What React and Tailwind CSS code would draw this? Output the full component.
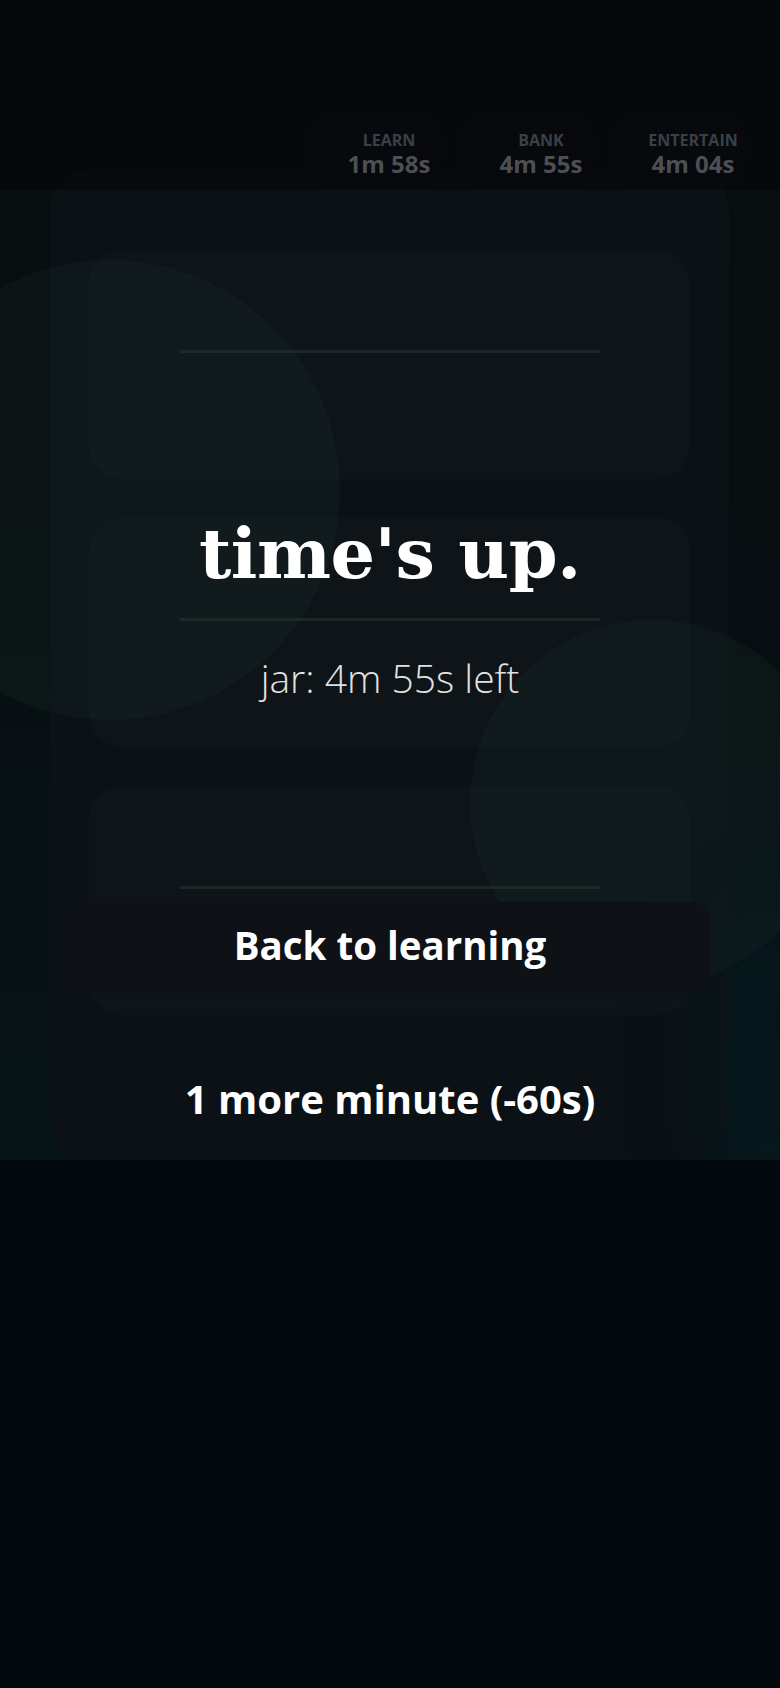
import React from "react";

const sans = { fontFamily: '"Open Sans", "Noto Sans", sans-serif' };
const serif = { fontFamily: '"DejaVu Serif", "Liberation Serif", serif' };

function Stat({ label, value }) {
  return (
    <div className="w-[136px] h-[75px] rounded-[24px] bg-[#07090c] flex flex-col items-center pl-[28px] pt-[18px]">
      <div className="text-[16px] leading-[18px] font-bold uppercase text-[#3b4046]">{label}</div>
      <div className="mt-[3px] text-[24px] leading-[24px] font-bold text-[#4c4f54] whitespace-nowrap">{value}</div>
    </div>
  );
}

function InnerCard() {
  return (
    <div className="h-[229px] rounded-[32px] bg-[#0e1417] flex justify-center pt-[100px]">
      <div className="w-[420px] h-[3px] bg-[#192827]" />
    </div>
  );
}

export default function App() {
  return (
    <div className="relative w-full h-[1688px] bg-[#020a0d] overflow-hidden" style={sans}>
      {/* dimmed page behind */}
      <div className="relative h-[1160px] overflow-hidden bg-gradient-to-b from-[#080d10] via-[#080e11] to-[#061417]">
        <div className="pt-[170px] pl-[50px] pr-[51px]">
          <div className="h-[990px] rounded-[40px] bg-[#0b1114] pt-[80px] px-[39px] flex flex-col gap-[39px]">
            <InnerCard />
            <InnerCard />
            <InnerCard />
          </div>
        </div>

        {/* decorative blobs */}
        <div className="absolute left-[-120px] top-[260px] w-[460px] h-[460px] rounded-full bg-[rgba(40,72,68,0.12)]" />
        <div className="absolute left-[470px] top-[620px] w-[364px] h-[364px] rounded-full bg-[rgba(40,72,68,0.12)]" />
        <div className="absolute right-[-60px] top-[900px] w-[140px] h-[300px] rounded-full bg-[rgba(0,60,70,0.12)] blur-2xl" />

        {/* header */}
        <div className="absolute top-0 left-0 w-full h-[190px] bg-black/30">
          <div className="flex justify-end gap-[16px] pr-[33px] pt-[113px]">
            <Stat label="Learn" value="1m 58s" />
            <Stat label="Bank" value="4m 55s" />
            <Stat label="Entertain" value="4m 04s" />
          </div>
        </div>
      </div>

      {/* time's up overlay */}
      <div className="absolute top-0 left-0 w-full flex flex-col items-center pt-[514px]">
        <h1 className="text-[70px] leading-[80px] font-bold text-white tracking-[-0.5px]" style={serif}>
          time's up.
        </h1>
        <p className="mt-[64px] text-[39px] leading-none font-light text-[#e2e2e2]">jar: 4m 55s left</p>
        <button className="mt-[205px] w-[640px] h-[92px] rounded-[18px] bg-[#0e1116] text-[38.5px] font-bold text-white pb-[5px]">
          Back to learning
        </button>
        <button className="mt-[60px] w-[640px] h-[90px] text-[40px] font-bold text-white">
          1 more minute (-60s)
        </button>
      </div>
    </div>
  );
}
